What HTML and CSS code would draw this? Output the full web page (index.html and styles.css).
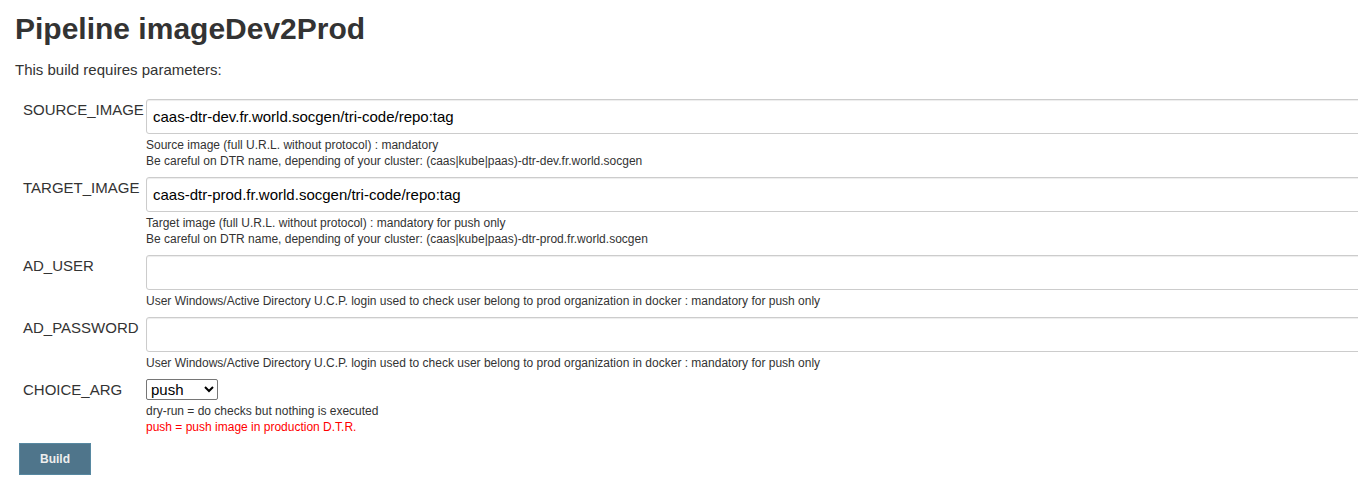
FILE: index.html
```html
<!DOCTYPE html>
<html lang="en">
<head>
<meta charset="utf-8">
<title>Pipeline imageDev2Prod</title>
<link rel="stylesheet" href="styles.css">
</head>
<body>
<main class="page">
  <h1 class="title">Pipeline imageDev2Prod</h1>
  <p class="intro">This build requires parameters:</p>
  <form class="form">
    <div class="params">
      <label class="name" for="source">SOURCE_IMAGE</label>
      <div class="setting">
        <input class="text-input" id="source" type="text" value="caas-dtr-dev.fr.world.socgen/tri-code/repo:tag">
        <p class="help">Source image (full U.R.L. without protocol) : mandatory<br>Be careful on DTR name, depending of your cluster: (caas|kube|paas)-dtr-dev.fr.world.socgen</p>
      </div>
      <label class="name" for="target">TARGET_IMAGE</label>
      <div class="setting">
        <input class="text-input" id="target" type="text" value="caas-dtr-prod.fr.world.socgen/tri-code/repo:tag">
        <p class="help">Target image (full U.R.L. without protocol) : mandatory for push only<br>Be careful on DTR name, depending of your cluster: (caas|kube|paas)-dtr-prod.fr.world.socgen</p>
      </div>
      <label class="name" for="user">AD_USER</label>
      <div class="setting">
        <input class="text-input" id="user" type="text">
        <p class="help">User Windows/Active Directory U.C.P. login used to check user belong to prod organization in docker : mandatory for push only</p>
      </div>
      <label class="name" for="password">AD_PASSWORD</label>
      <div class="setting">
        <input class="text-input" id="password" type="password">
        <p class="help">User Windows/Active Directory U.C.P. login used to check user belong to prod organization in docker : mandatory for push only</p>
      </div>
      <label class="name" for="choice">CHOICE_ARG</label>
      <div class="setting">
        <select class="choice" id="choice">
          <option>dry-run</option>
          <option selected>push</option>
        </select>
        <p class="help">dry-run = do checks but nothing is executed<br><span class="warning">push = push image in production D.T.R.</span></p>
      </div>
    </div>
    <button class="build" type="button">Build</button>
  </form>
</main>
</body>
</html>
```
FILE: styles.css
```css
* {
  box-sizing: border-box;
}

body {
  margin: 0;
  background: #fff;
  color: #333;
  font: 15px/20px "Liberation Sans", Arial, sans-serif;
}

.page {
  padding: 12px 0 0 15px;
  overflow: hidden;
}

.title {
  margin: 0 0 14px;
  font-size: 30px;
  line-height: 34px;
}

.intro {
  margin: 0 0 19px;
}

/* The fields run past the right edge of the pane. */
.form {
  margin-right: -8px;
}

.params {
  display: grid;
  grid-template-columns: 123px 1fr;
  row-gap: 8px;
  padding-left: 8px;
  margin-bottom: 8px;
}

.name {
  padding-top: 1px;
}

.text-input {
  display: block;
  width: 100%;
  height: 35px;
  padding: 6px;
  border: 1px solid #ccc;
  border-radius: 3px;
  box-shadow: inset 0 1px 1px rgba(0, 0, 0, 0.075);
  background: #fff;
  color: #000;
  font: inherit;
}

.help {
  margin: 3px 0 0;
  font-size: 12px;
  line-height: 16px;
}

.warning {
  color: #f00;
}

.choice {
  display: block;
  width: 72px;
  height: 21px;
  padding: 0;
  border: 1px solid #767676;
  border-radius: 2px;
  background-color: #fff;
  color: #000;
  font: inherit;
}

.build {
  display: block;
  margin-left: 4px;
  padding: 0 20px;
  height: 32px;
  border: 1px solid #5788a1;
  background: #4f758b;
  color: #eee;
  font: bold 12px/30px "Liberation Sans", Arial, sans-serif;
}
```
